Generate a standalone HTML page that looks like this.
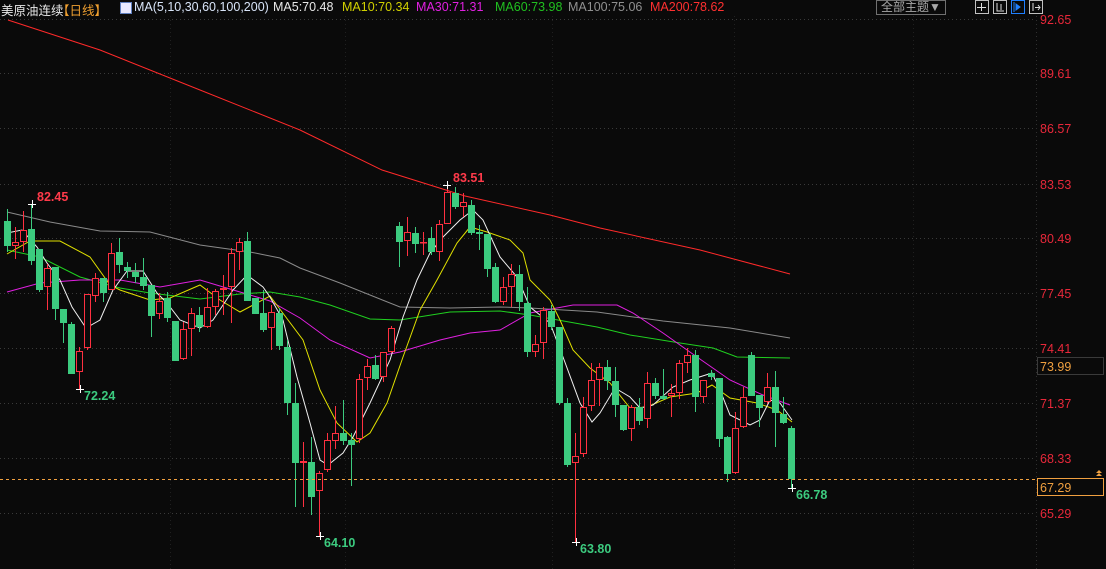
<!DOCTYPE html>
<html><head><meta charset="utf-8">
<style>
html,body{margin:0;padding:0;background:#0a0a0a;width:1106px;height:569px;overflow:hidden;font-family:"Liberation Sans","Noto Sans CJK SC",sans-serif}
#top{position:absolute;left:0;top:0;height:16px;font-size:12.5px;white-space:nowrap}
#top span{position:absolute;top:0px}
</style></head><body>
<svg id="c" width="1106" height="569" style="position:absolute;left:0;top:0"></svg>
<div id="top">
<span style="left:1px;color:#e8e8e8">美原油连续</span>
<span style="left:57px;color:#f0a030">【日线】</span>
<span style="left:120px;top:2px;width:10px;height:10px;background:#e8e8ff;border:1px solid #6080c0"></span>
<span style="left:134px;color:#d8e4f8">MA(5,10,30,60,100,200)</span>
<span style="left:273px;color:#e8e8e8">MA5:70.48</span>
<span style="left:342px;color:#d0d000">MA10:70.34</span>
<span style="left:416px;color:#e020e0">MA30:71.31</span>
<span style="left:495px;color:#20c020">MA60:73.98</span>
<span style="left:568px;color:#909090">MA100:75.06</span>
<span style="left:650px;color:#ff3030">MA200:78.62</span>
</div>
<div style="position:absolute;left:876px;top:0;width:68px;height:13px;border:1px solid #707070;color:#a8a8a8;font-size:12px;line-height:13px;text-align:center">全部主题▼</div>
<script>
var s='';
function L(x1,y1,x2,y2,c,w,d){s+='<line x1="'+x1+'" y1="'+y1+'" x2="'+x2+'" y2="'+y2+'" stroke="'+c+'" stroke-width="'+(w||1)+'"'+(d?' stroke-dasharray="'+d+'"':'')+'/>';}
function T(x,y,t,c,sz,b){s+='<text x="'+x+'" y="'+y+'" fill="'+c+'" font-size="'+(sz||12)+'" font-family="Liberation Sans, sans-serif"'+(b?' font-weight="bold"':'')+'>'+t+'</text>';}
var labs=[[92.65,19],[89.61,73],[86.57,128],[83.53,184],[80.49,238],[77.45,293],[74.41,348],[71.37,403],[68.33,458],[65.29,513]];
labs.forEach(function(l){L(0,l[1]+0.5,1036,l[1]+0.5,'#3a3a3a',1,'1,3');T(1040,l[1]+5,l[0].toFixed(2),'#e8283a',12.5);});
[170,345,552,734,913].forEach(function(x){L(x+0.5,16,x+0.5,569,'#202020',1,'1,3');});
L(1036.5,16,1036.5,569,'#303030',1,'1,3');
[975,993,1011,1029].forEach(function(x,i){s+='<rect x="'+(x+0.5)+'" y="0.5" width="13" height="13" fill="none" stroke="'+(i==2?'#2080ff':'#c0c0c0')+'"/>';});
s+='<path d="M981.5 3v8M977 7.5h9" stroke="#ddd"/><path d="M997 3v8h7M1001 4v6" stroke="#ddd" fill="none"/><path d="M1014 2v10M1016 4l4 3-4 3z" stroke="#2080ff" fill="#2080ff"/><path d="M1033 3v8M1035 7.5h5M1038 5l2 2.5-2 2.5" stroke="#ddd" fill="none"/>';
var D="G221,246,209,252|R242,246,227,259|R230,242,211,252|G229,261,204,265|G249,290,249,292|R268,287,264,310|G267,309,267,320|G309,323,309,343|G324,374,322,374|R351,372,347,389|R294,348,294,350|R278,296,273,302|G278,293,278,302|R253,290,243,290|G252,265,238,273|G267,271,262,278|G272,277,263,283|G277,286,258,290|G285,316,285,337|R301,314,293,319|G298,318,292,322|G321,361,321,361|R329,359,322,360|R313,329,308,356|G315,327,307,332|R307,327,288,328|R291,307,289,315|R288,290,275,315|R253,287,248,323|R242,252,238,270|G241,301,232,301|G298,314,298,314|G313,330,290,332|R312,328,305,350|G313,346,308,350|G347,403,340,415|G403,463,383,507|R461,463,442,507|G462,497,437,515|R473,491,471,537|R440,470,433,472|R433,441,406,449|G433,441,400,445|G440,445,433,486|R379,439,374,443|R366,378,359,390|G365,379,355,380|R352,377,352,382|R328,352,326,353|G226,242,222,267|R232,241,217,256|G233,244,227,253|R242,243,232,255|G238,252,227,255|R224,252,220,261|R192,224,185,224|G193,207,187,209|R202,207,193,217|G205,233,200,235|G232,234,225,250|G234,269,234,277|G267,302,263,303|R287,302,277,305|R274,287,264,307|G274,302,265,311|G303,352,287,357|R344,352,335,357|R310,343,307,359|G311,327,305,330|G327,403,327,405|G403,465,398,467|R456,463,433,543|R407,454,397,457|R380,406,363,411|R367,380,363,406|G367,381,360,390|G381,405,367,417|G405,430,405,431|R407,429,405,441|G407,421,398,425|R383,419,372,428|G383,396,378,399|G396,399,369,400|R393,396,384,417|R363,393,360,399|R355,363,348,373|G355,397,350,412|R380,397,380,403|G373,377,370,380|G378,439,378,447|G437,474,436,482|R428,473,412,474|R397,427,387,428|G355,396,352,396|G395,408,395,427|R387,402,373,404|G387,413,371,447|G414,423,397,424|G428,479,426,488".split('|');
function P(pts,c){s+='<polyline fill="none" stroke="'+c+'" stroke-width="1" points="'+pts+'"/>';}
P("8,20 100,50 200,90 300,130 382,170 465,196 550,215 600,228 700,250 790,274",'#ff2a2a');
P("7,212 50,222 100,231 150,232 200,245 250,252 280,258 300,268 340,283 400,307 450,308 500,307 530,308 597,312 663,321 730,328 790,338",'#8a8a8a');
P("7,250 40,257 80,277 120,288 150,293 200,299 240,294 270,292 300,297 330,305 370,319 400,320 450,312 500,311 530,315 597,327 630,335 680,343 713,348 737,357 790,358",'#20d020');
P("7,292 40,283 80,280 120,280 160,287 200,280 240,292 270,301 300,318 330,340 370,358 400,352 440,340 470,333 500,330 530,313 573,305 617,305 633,313 663,333 697,357 730,380 763,395 790,405",'#e020e0');
P("7,254 30,241 60,241 90,257 110,285 120,290 150,300 170,298 200,285 220,300 240,312 270,296 303,340 320,390 337,423 357,442 370,433 387,403 403,357 420,310 437,280 457,243 470,227 487,232 510,240 523,253 530,280 550,300 560,320 573,350 590,368 610,383 630,408 647,407 670,397 697,393 712,385 730,398 757,403 777,410 792,422",'#e0e000');
P("7,233 22,230 37,247 47,263 60,280 72,307 86,328 100,320 113,290 127,271 143,271 157,293 167,303 180,320 200,328 213,320 233,290 247,275 263,287 270,297 283,320 297,377 310,423 320,460 328,465 343,453 353,437 370,403 390,360 403,317 417,280 430,253 443,237 460,220 473,210 483,220 500,257 517,277 530,307 550,323 563,357 580,403 592,422 600,413 615,388 630,397 640,408 653,405 673,387 690,380 712,373 720,390 730,415 750,425 760,420 770,400 780,403 792,420",'#f0f0f0');
var cs='';
D.forEach(function(d,i){var c=d[0],v=d.slice(1).split(',').map(Number),x=Math.round(7.3+8*i);
 if(c=='G'){cs+='<line x1="'+(x+0.5)+'" y1="'+v[2]+'" x2="'+(x+0.5)+'" y2="'+v[3]+'" stroke="#3ccb7f"/><rect x="'+(x-3)+'" y="'+v[0]+'" width="7" height="'+Math.max(1,v[1]-v[0])+'" fill="#3ccb7f"/>';}
 else{cs+='<line x1="'+(x+0.5)+'" y1="'+v[2]+'" x2="'+(x+0.5)+'" y2="'+v[0]+'" stroke="#ff3040"/><line x1="'+(x+0.5)+'" y1="'+v[1]+'" x2="'+(x+0.5)+'" y2="'+v[3]+'" stroke="#ff3040"/><rect x="'+(x-2.5)+'" y="'+(v[0]+0.5)+'" width="6" height="'+Math.max(0.5,v[1]-v[0]-1)+'" fill="#0a0a0a" stroke="#ff3040"/>';}
});
s+=cs;
L(0,479.5,1036,479.5,'#f0a040',1,'3,3');
function X(x,y){L(x-4,y+0.5,x+4,y+0.5,'#fff');L(x+0.5,y-4,x+0.5,y+4,'#fff');}
X(32,204);T(37,201,'82.45','#ff3a4a',12.5,1);
X(80,389);T(84,400,'72.24','#3ccb7f',12.5,1);
X(320,536);T(324,547,'64.10','#3ccb7f',12.5,1);
X(447,185);T(453,182,'83.51','#ff3a4a',12.5,1);
X(576,542);T(580,553,'63.80','#3ccb7f',12.5,1);
X(792,488);T(796,499,'66.78','#3ccb7f',12.5,1);
s+='<rect x="1037.5" y="357.5" width="66" height="17" fill="#0a0a0a" stroke="#3a3a3a"/>';T(1040,371,'73.99','#f0a040',12.5);
s+='<rect x="1037.5" y="478.5" width="66" height="17" fill="#0a0a0a" stroke="#f0a040"/>';T(1040,492,'67.29','#f0a040',12.5);
s+='<path d="M1096 476l3-3 3 3zM1096 473l3-3 3 3z" fill="#f0a040"/>';
document.getElementById('c').innerHTML=s;
</script>
</body></html>
